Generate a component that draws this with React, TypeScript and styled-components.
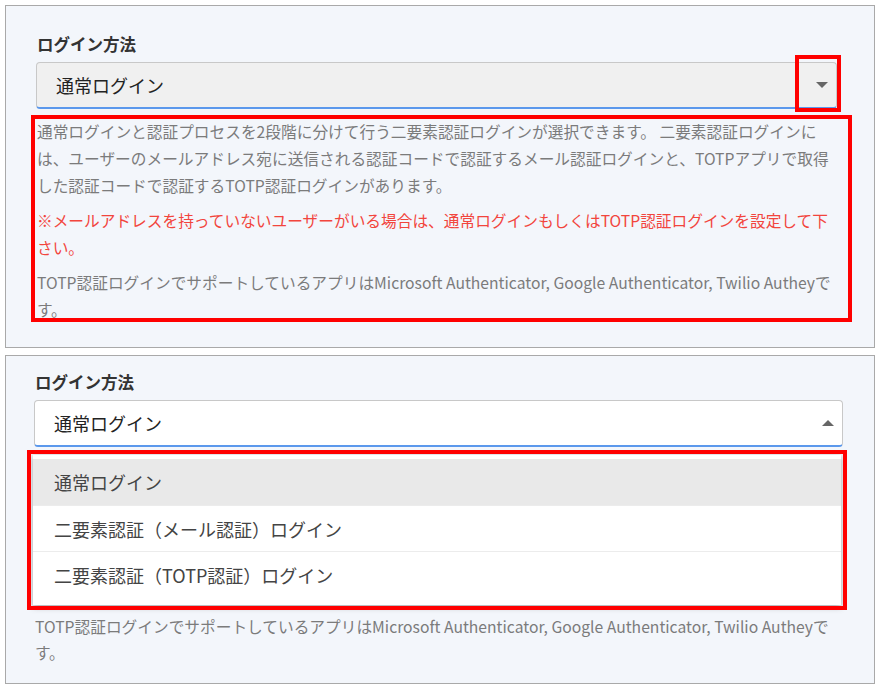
import React from "react";
import styled, { createGlobalStyle } from "styled-components";

const GlobalStyle = createGlobalStyle`
  html, body {
    margin: 0;
    padding: 0;
    background: #ffffff;
  }
  body {
    font-family: "Noto Sans CJK JP", "Noto Sans", sans-serif;
  }
`;

const OPTIONS = [
  "通常ログイン",
  "二要素認証（メール認証）ログイン",
  "二要素認証（TOTP認証）ログイン",
];

// covered: the open menu lies over the first paragraphs
function HelpText(props: { lineHeight: number; covered?: boolean }) {
  return (
    <Help $lineHeight={props.lineHeight}>
      <HelpParagraph $hidden={props.covered}>
        通常ログインと認証プロセスを2段階に分けて行う二要素認証ログインが選択できます。
        二要素認証ログインには、ユーザーのメールアドレス宛に送信される認証コードで認証するメール認証ログインと、TOTPアプリで取得した認証コードで認証するTOTP認証ログインがあります。
      </HelpParagraph>
      <HelpParagraph $warning $hidden={props.covered}>
        ※メールアドレスを持っていないユーザーがいる場合は、通常ログインもしくはTOTP認証ログインを設定して下さい。
      </HelpParagraph>
      <HelpParagraph>
        TOTP認証ログインでサポートしているアプリはMicrosoft Authenticator, Google
        Authenticator, Twilio Autheyです。
      </HelpParagraph>
    </Help>
  );
}

export default function App() {
  return (
    <>
      <GlobalStyle />
      <Page>
        <Panel $pad="26px 37px 24px 30px">
          <Label>ログイン方法</Label>
          <SelectBox $open={false}>
            <SelectValue>{OPTIONS[0]}</SelectValue>
            <Caret $up={false} />
            <Highlight style={{ top: -8, right: -5, bottom: -5, width: 38 }} />
          </SelectBox>
          <HelpWrap $top={9}>
            <HelpText lineHeight={27} />
            <Highlight style={{ top: -3, left: -5, right: -15, bottom: 1 }} />
          </HelpWrap>
        </Panel>
        <Panel $pad="14px 31px 17px 28px">
          <Label>ログイン方法</Label>
          <SelectWrap>
            <SelectBox $open>
              <SelectValue>{OPTIONS[0]}</SelectValue>
              <Caret $up />
            </SelectBox>
            <Menu>
              {OPTIONS.map((option, i) => (
                <MenuItem key={option} $active={i === 0}>
                  {option}
                </MenuItem>
              ))}
              <Highlight style={{ top: -5, left: -6, right: -6, bottom: -5 }} />
            </Menu>
          </SelectWrap>
          <HelpWrap $top={21}>
            <HelpText lineHeight={26} covered />
          </HelpWrap>
        </Panel>
      </Page>
    </>
  );
}

const Page = styled.div`
  display: flex;
  flex-direction: column;
  gap: 7px;
  padding: 5px 2px 0 5px;
`;

const Panel = styled.section<{ $pad: string }>`
  display: flex;
  flex-direction: column;
  background: #f3f6fb;
  border: 1px solid #a9a9a9;
  padding: ${(p) => p.$pad};
`;

const Label = styled.div`
  font-size: 16.5px;
  line-height: 24px;
  font-weight: 700;
  color: #333333;
  padding-left: 1px;
  margin-bottom: 6px;
`;

const SelectWrap = styled.div`
  position: relative;
`;

const SelectBox = styled.div<{ $open: boolean }>`
  position: relative;
  display: flex;
  align-items: center;
  flex-shrink: 0;
  height: 47px;
  box-sizing: border-box;
  padding: 0 8px 0 19px;
  background: ${(p) => (p.$open ? "#ffffff" : "#f0f0f0")};
  border: 1px solid #c8c8c8;
  border-bottom: 2px solid #5b98ec;
  border-radius: 4px;
`;

const SelectValue = styled.span`
  flex: 1;
  font-size: 18px;
  font-weight: 400;
  color: #222222;
`;

const Caret = styled.span<{ $up: boolean }>`
  width: 0;
  height: 0;
  border-left: 6px solid transparent;
  border-right: 6px solid transparent;
  ${(p) =>
    p.$up ? "border-bottom: 6px solid #666666;" : "border-top: 6px solid #666666;"}
`;

const Highlight = styled.div`
  position: absolute;
  border: 4px solid #ff0000;
  pointer-events: none;
`;

const Menu = styled.ul`
  position: absolute;
  top: calc(100% + 8px);
  left: -1px;
  right: 2px;
  z-index: 2;
  margin: 0;
  padding: 4px 0 8px;
  list-style: none;
  background: #ffffff;
  box-shadow: 0 2px 6px rgba(0, 0, 0, 0.35);
`;

const MenuItem = styled.li<{ $active: boolean }>`
  height: 46px;
  box-sizing: border-box;
  display: flex;
  align-items: center;
  padding-left: 21px;
  font-size: 18px;
  color: #444444;
  background: ${(p) => (p.$active ? "#e9e9e9" : "#ffffff")};
  & + & {
    border-top: 1px solid #ececec;
  }
`;

const HelpWrap = styled.div<{ $top: number }>`
  position: relative;
  margin-top: ${(p) => p.$top}px;
`;

const Help = styled.div<{ $lineHeight: number }>`
  display: flex;
  flex-direction: column;
  gap: 8px;
  padding-left: 1px;
  font-size: 15.7px;
  line-height: ${(p) => p.$lineHeight}px;
`;

const HelpParagraph = styled.p<{ $warning?: boolean; $hidden?: boolean }>`
  margin: 0;
  color: ${(p) => (p.$warning ? "#f2453d" : "#7b7b7b")};
  visibility: ${(p) => (p.$hidden ? "hidden" : "visible")};
`;
